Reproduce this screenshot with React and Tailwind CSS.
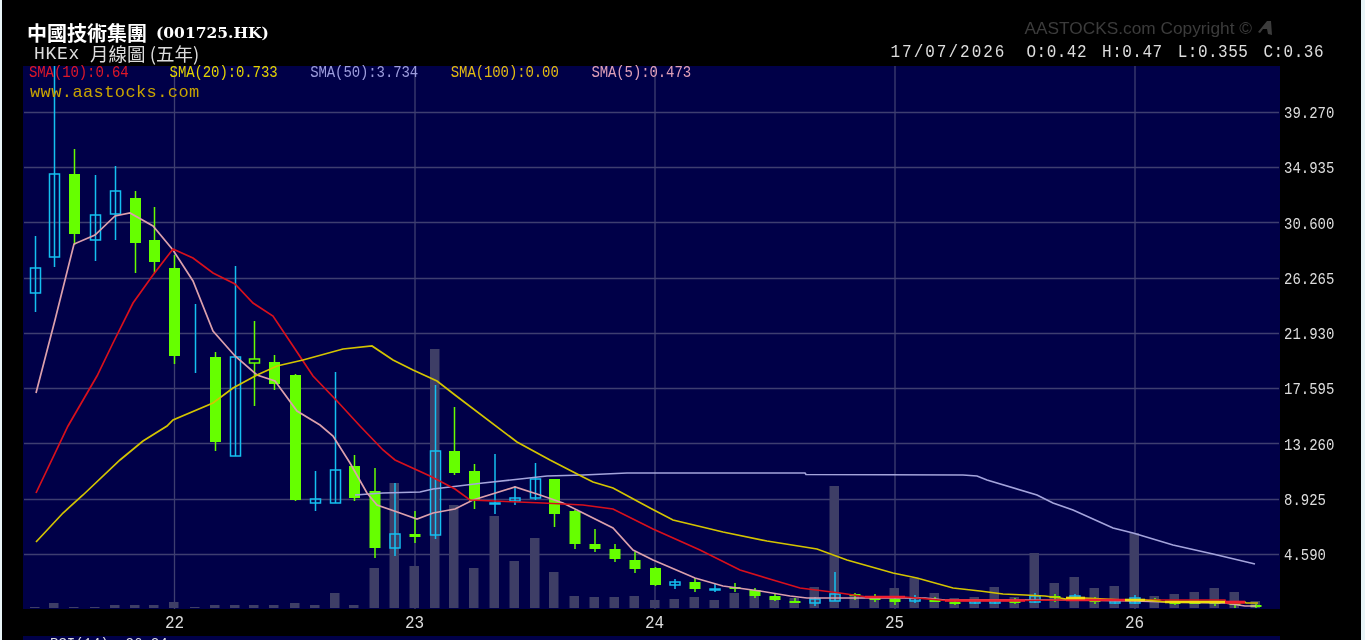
const mono = "font-['Liberation_Mono','Noto_Sans_CJK_TC',monospace]"

// x, high, low, body top, body bottom, c = up (hollow cyan), g = down (solid green), h = hollow green
const candles = [
  [35.5, 236, 312, 268, 293, 'c'], [54.5, 66, 267, 174, 257, 'c'], [74.5, 149, 245, 174, 234, 'g'],
  [95.5, 175, 261, 215, 240, 'c'], [115.5, 166, 240, 191, 214, 'c'], [135.5, 191, 273, 198, 243, 'g'],
  [154.5, 207, 273, 240, 262, 'g'], [174.5, 255, 364, 268, 356, 'g'], [195.5, 304, 373, 357, 357, 'c'],
  [215.5, 352, 451, 357, 442, 'g'], [235.5, 266, 456, 357, 456, 'c'], [254.5, 321, 406, 359, 363, 'h'],
  [274.5, 355, 390, 362, 384, 'g'], [295.5, 374, 501, 375, 500, 'g'], [315.5, 471, 511, 499, 503, 'c'],
  [335.5, 372, 503, 470, 503, 'c'], [354.5, 455, 501, 466, 498, 'g'], [375, 468, 558, 491, 548, 'g'],
  [395, 483, 556, 534, 548, 'c'], [415, 511, 543, 534, 537, 'g'], [435.5, 385, 539, 451, 535, 'c'],
  [454.5, 407, 475, 451, 473, 'g'], [474.5, 464, 509, 471, 501, 'g'], [495, 454, 514, 503, 504, 'c'],
  [515, 486, 505, 498, 501, 'c'], [535.5, 463, 500, 479, 498, 'c'], [554.5, 479, 527, 479, 514, 'g'],
  [575, 510, 549, 511, 544, 'g'], [595, 529, 552, 544, 549, 'g'], [615, 544, 562, 549, 559, 'g'],
  [635, 552, 573, 560, 569, 'g'], [655.5, 567, 586, 568, 585, 'g'], [675, 579, 589, 582, 585, 'c'],
  [695, 578, 592, 582, 589, 'g'], [715, 584, 592, 589, 590, 'c'], [735, 583, 592, 587, 588, 'g'],
  [755, 588, 598, 590, 596, 'g'], [775, 594, 601, 596, 600, 'g'], [795, 598, 603, 601, 601, 'g'],
  [815, 597, 606, 599, 603, 'c'], [835, 572, 601, 594, 601, 'c'], [855, 593, 600, 594, 596, 'g'],
  [875, 594, 602, 598, 598, 'g'], [895, 598, 605, 599, 602, 'g'], [915, 595, 603, 598, 601, 'c'],
  [935, 597, 602, 600, 600, 'g'], [955, 601, 605, 602, 602, 'g'], [975, 600, 604, 601, 603, 'c'],
  [995, 600, 604, 601, 603, 'c'], [1015, 598, 604, 600, 603, 'g'], [1035, 593, 603, 596, 602, 'c'],
  [1055, 594, 602, 596, 598, 'g'], [1075, 594, 600, 596, 600, 'c'], [1095, 597, 604, 600, 600, 'g'],
  [1115, 600, 604, 601, 603, 'c'], [1135, 595, 604, 598, 603, 'c'], [1155, 598, 601, 599, 600, 'g'],
  [1175, 601, 605, 602, 602, 'g'], [1195, 601, 604, 602, 602, 'g'], [1215, 601, 606, 602, 604, 'g'],
  [1235, 602, 608, 603, 604, 'g'], [1256, 604, 608, 605, 606, 'g'],
]

// top of each volume bar, same order as candles
const volumes = [
  607, 603, 607, 607, 605, 605, 605, 602, 607, 605, 605, 605, 605, 603, 605, 593, 605, 568, 483, 566, 349,
  505, 568, 516, 561, 538, 572, 596, 597, 597, 596, 600, 599, 597, 600, 593, 591, 597, 598, 587, 486, 595,
  596, 588, 578, 593, 598, 597, 587, 597, 553, 583, 577, 588, 586, 533, 596, 594, 592, 588, 592, 601,
]

const sma5 = [[36,393],[55,320],[74,244],[95,235],[115,216],[130,213],[153,226],[173,250],[193,281],[213,331],[235,356],[257,375],[275,381],[297,411],[320,425],[333,436],[350,463],[367,493],[377,505],[400,513],[417,519],[433,513],[455,509],[473,500],[515,487],[540,495],[563,503],[613,528],[633,550],[653,560],[695,578],[723,586],[760,591],[790,596],[807,598],[925,598],[945,600],[1075,600],[1135,601],[1165,602],[1225,603],[1245,606],[1256,606]]
const sma10 = [[36,493],[68,426],[97,376],[113,343],[133,303],[153,275],[173,249],[193,258],[213,273],[235,284],[253,303],[273,316],[293,346],[313,376],[337,401],[360,426],[383,450],[395,460],[430,476],[455,489],[470,500],[543,503],[583,505],[613,509],[653,529],[700,550],[740,570],[773,580],[800,588],[840,593],[867,597],[905,597],[945,600.5],[1025,600.5],[1060,600],[1225,600],[1226,603],[1245,603]]
const sma20 = [[36,542],[63,513],[83,495],[120,460],[143,441],[167,426],[173,420],[213,403],[233,388],[257,375],[277,366],[303,360],[343,349],[372,346],[393,360],[413,370],[437,381],[455,395],[517,442],[550,460],[583,477],[593,482],[613,488],[650,508],[673,520],[723,532],[767,541],[817,549],[847,560],[893,573],[917,578],[953,588],[980,591],[1003,594],[1025,595],[1045,596],[1060,598],[1066,599],[1085,598],[1125,600],[1145,600],[1165,602],[1225,602],[1245,602],[1246,603],[1258,603]]
const sma50 = [[355,495],[383,493],[420,492],[433,489],[450,487],[483,483],[520,479],[547,476],[583,475],[627,473],[805,473],[806,474.5],[963,475],[977,476],[987,480],[1037,495],[1053,503],[1073,510],[1113,528],[1133,533],[1173,545],[1213,554],[1255,564]]

const lines = [
  { points: sma50, color: '#a4a4dc' },
  { points: sma5, color: '#dca0ac' },
  { points: sma10, color: '#d8101c' },
  { points: sma20, color: '#d4c400' },
]

// near the end the averages sit flat on top of each other and read as thick bars
const flats = [
  [865, 905, 597, '#f02030'], [945, 1025, 600.5, '#f02030'], [1066, 1125, 600, '#f02030'], [1125, 1145, 600, '#f0dc10'],
  [1066, 1085, 598, '#f0dc10'], [1165, 1225, 602, '#f0dc10'], [1225, 1245, 602, '#f02030'],
]

const hGrid = [112, 167, 222, 278, 333, 388, 443, 499, 554]
const vGrid = [174.5, 415, 655, 895, 1135]
const yLabels = ['39.270', '34.935', '30.600', '26.265', '21.930', '17.595', '13.260', '8.925', '4.590']
const xLabels = ['22', '23', '24', '25', '26']

const legend = [
  { text: 'SMA(10):0.64', cls: 'text-[#e01828]' },
  { text: 'SMA(20):0.733', cls: 'text-[#e4d400]' },
  { text: 'SMA(50):3.734', cls: 'text-[#9c9cdc]' },
  { text: 'SMA(100):0.00', cls: 'text-[#e4bc10]' },
  { text: 'SMA(5):0.473', cls: 'text-[#e0a0b8]' },
]

function Candle({ c }) {
  const [x, high, low, top, bottom, kind] = c
  const color = kind === 'c' ? '#14c0f0' : '#66ff00'
  return (
    <g>
      <line x1={x} x2={x} y1={high} y2={low} stroke={color} strokeWidth="1.5" />
      {kind === 'g' ? (
        <rect x={x - 5.5} y={top} width="11" height={Math.max(bottom - top, 2)} fill={color} />
      ) : (
        <rect x={x - 5} y={top} width="10" height={bottom - top} fill={kind === 'h' ? '#000048' : 'none'} stroke={color} strokeWidth="1.5" />
      )}
    </g>
  )
}

function Chart() {
  return (
    <svg className="block" width="1257" height="543" viewBox="23 66 1257 543">
      <rect x="23" y="66" width="1257" height="543" fill="#000048" />
      {hGrid.map((y) => (
        <line key={y} x1="24" x2="1279" y1={y + 0.5} y2={y + 0.5} stroke="#3e3e70" strokeWidth="1.3" />
      ))}
      {vGrid.map((x) => (
        <line key={x} x1={x} x2={x} y1="66" y2="609" stroke="#3e3e70" strokeWidth="1.3" />
      ))}
      {volumes.map((top, i) => (
        <rect key={i} x={candles[i][0] - 5.5} y={top} width="9.5" height={608 - top} fill="#3e3e66" />
      ))}
      {candles.map((c) => (
        <Candle key={c[0]} c={c} />
      ))}
      {lines.map((l) => (
        <polyline key={l.color} points={l.points.join(' ')} fill="none" stroke={l.color} strokeWidth="1.7" />
      ))}
      {flats.map(([x1, x2, y, color]) => (
        <line key={x1 + color} x1={x1} x2={x2} y1={y} y2={y} stroke={color} strokeWidth="2.6" />
      ))}
    </svg>
  )
}

export default function App() {
  return (
    <div className="h-[640px] overflow-hidden bg-[#e8f4f7] pl-[2px]">
      <div className={`flex h-[640px] w-[1359px] flex-col bg-black blur-[0.35px] ${mono}`}>
        {/* Header */}
        <div className="flex h-[66px] justify-between">
          <div className="pl-[25px] pt-[21px]">
            <h1 className="flex h-[23px] items-center gap-[9px] text-[20px] font-bold leading-none text-white">
              <span className="font-['Noto_Sans_CJK_TC',sans-serif]">中國技術集團</span>
              <span className="font-['DejaVu_Serif',serif] text-[15.5px]">(001725.HK)</span>
            </h1>
            <p className="flex h-[19px] items-center gap-[10px] pl-[7px] text-[18.5px] leading-none text-[#dddddd]">
              <span className="text-[18px] tracking-[0.7px]">HKEx</span>
              <span className="font-['Noto_Sans_CJK_TC',sans-serif]">月線圖 (五年)</span>
            </p>
          </div>
          <div className="flex flex-col items-end pr-[37px] pt-[19px]">
            <div className="mr-[51px] flex h-[20px] items-center gap-[5px] font-['Liberation_Sans',sans-serif] text-[17.3px] leading-none text-[#3c3c3c]">
              <span>AASTOCKS.com Copyright ©</span>
              <svg width="16" height="16" viewBox="0 0 16 16">
                <path d="M1 12 L10 1 L14 1 L15 15 L11 14 L10 9 L6 9 L3 13 Z" fill="#3c3c3c" />
              </svg>
            </div>
            <div className="flex h-[30px] scale-y-[1.2] items-center gap-[15px] text-[16px] leading-none text-[#dddddd]">
              <span className="mr-[5px] tracking-[2px]">17/07/2026</span>
              <span className="tracking-[0.5px]">O:0.42</span>
              <span className="tracking-[0.5px]">H:0.47</span>
              <span className="tracking-[0.5px]">L:0.355</span>
              <span className="tracking-[0.5px]">C:0.36</span>
            </div>
          </div>
        </div>

        {/* Plot and price axis */}
        <div className="flex pl-[21px]">
          <div className="relative">
            <Chart />
            <div className="absolute left-[6px] top-[-2px] flex scale-y-[1.2] text-[14px] leading-[16px] tracking-[-0.1px]">
              {legend.map((item) => (
                <span key={item.text} className={`w-[140.6px] ${item.cls}`}>{item.text}</span>
              ))}
            </div>
            <div className="absolute left-[7px] top-[17px] text-[17px] leading-[20px] tracking-[0.4px] text-[#c8a400]">www.aastocks.com</div>
          </div>
          <div className="flex flex-col pl-[4px] pt-[19px] text-[14px] leading-none text-[#dddddd]">
            {yLabels.map((label) => (
              <div key={label} className="flex h-[55.25px] scale-y-[1.2] items-center">{label}</div>
            ))}
          </div>
        </div>

        {/* Year axis */}
        <div className="flex h-[27px] items-center pl-[52.5px] text-[16px] leading-none text-[#dddddd]">
          {xLabels.map((label) => (
            <div key={label} className="w-[240px] scale-y-[1.2] text-center">{label}</div>
          ))}
        </div>

        {/* Top of the next indicator panel, cut off by the window */}
        <div className="ml-[21px] h-[4px] w-[1257px] overflow-hidden bg-[#000048] pl-[27px] text-[14px] leading-[16px] text-[#dddddd]">
          RSI(14):  26.24
        </div>
      </div>
    </div>
  )
}
